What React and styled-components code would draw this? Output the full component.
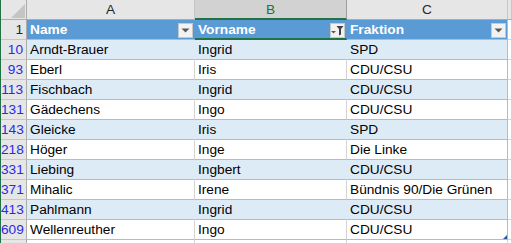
import React from "react";
import styled, { createGlobalStyle } from "styled-components";

const Global = createGlobalStyle`
  html, body { margin: 0; padding: 0; background: #fff; overflow: hidden; }
  body { font-family: "Liberation Sans", Arial, sans-serif; }
`;

const rows = [
  [10, "Arndt-Brauer", "Ingrid", "SPD"],
  [93, "Eberl", "Iris", "CDU/CSU"],
  [113, "Fischbach", "Ingrid", "CDU/CSU"],
  [131, "Gädechens", "Ingo", "CDU/CSU"],
  [143, "Gleicke", "Iris", "SPD"],
  [218, "Höger", "Inge", "Die Linke"],
  [331, "Liebing", "Ingbert", "CDU/CSU"],
  [371, "Mihalic", "Irene", "Bündnis 90/Die Grünen"],
  [413, "Pahlmann", "Ingrid", "CDU/CSU"],
  [609, "Wellenreuther", "Ingo", "CDU/CSU"],
];

const Window = styled.div`
  width: 512px;
  height: 243px;
  overflow: hidden;
  border-left: 1px solid #217346;
  box-sizing: border-box;
`;

const Sheet = styled.div`
  display: grid;
  grid-template-columns: 26px 168px 152px 161px 1fr;
  grid-auto-rows: 20px;
  font-size: 13.7px;
  line-height: 20px;
`;

const Corner = styled.div`
  background: #e6e6e6;
  border-right: 1px solid #ababab;
  border-bottom: 1px solid #ababab;
  box-sizing: border-box;
  display: flex;
  align-items: flex-end;
  justify-content: flex-end;
  padding: 0 1px 1px 0;
`;

const ColHeader = styled.div`
  background: ${(p) => (p.$selected ? "#d2d2d2" : "#e6e6e6")};
  color: ${(p) => (p.$selected ? "#217346" : "#262626")};
  border-right: 1px solid ${(p) => (p.$selected ? "#9e9e9e" : "#c6c6c6")};
  border-bottom: ${(p) => (p.$selected ? "2px solid #217346" : "1px solid #ababab")};
  box-sizing: border-box;
  text-align: center;
  line-height: 19px;
`;

const RowHeader = styled.div`
  background: #e6e6e6;
  color: ${(p) => (p.$filtered ? "#2a2ae6" : "#262626")};
  border-right: 1px solid #ababab;
  border-bottom: 1px solid #c6c6c6;
  box-sizing: border-box;
  text-align: right;
  padding-right: 3px;
  padding-top: 1px;
  line-height: 18px;
`;

const HeadCell = styled.div`
  position: relative;
  background: #5b9bd5;
  color: #fff;
  font-weight: bold;
  padding-left: 3px;
  padding-top: 1px;
  line-height: 18px;
  box-sizing: border-box;
  border-bottom: ${(p) => (p.$active ? "2px solid #217346" : "1px solid #9bc2e6")};
  border-right: 1px solid ${(p) => (p.$last ? "#9bc2e6" : "#5b9bd5")};
  display: flex;
  align-items: center;
  justify-content: space-between;
`;

const FilterButton = styled.div`
  width: 15px;
  height: 15px;
  margin-right: 1px;
  margin-top: ${(p) => (p.$active ? "1px" : "0")};
  background: #f2f2f2;
  border: 1px solid #c8c8c8;
  box-sizing: border-box;
  display: flex;
  align-items: center;
  justify-content: center;
`;

const Cell = styled.div`
  position: relative;
  background: ${(p) => (p.$band ? "#ddebf7" : "#fff")};
  color: #000;
  padding-left: 3px;
  padding-top: 1px;
  line-height: 18px;
  white-space: nowrap;
  overflow: hidden;
  box-sizing: border-box;
  border-bottom: 1px solid #9bc2e6;
  border-right: 1px solid ${(p) => (p.$last ? "#9bc2e6" : p.$band ? "#ddebf7" : "#d4d4d4")};
`;

const EmptyCell = styled.div`
  background: #fff;
  box-sizing: border-box;
  border-bottom: 1px solid #d4d4d4;
  border-right: 1px solid #d4d4d4;
`;

const Handle = styled.div`
  position: absolute;
  right: 0;
  bottom: 0;
  width: 0;
  height: 0;
  border-left: 4px solid transparent;
  border-bottom: 4px solid #2f5597;
`;

const Arrow = () => (
  <svg width="9" height="5" viewBox="0 0 9 5">
    <path d="M0.5 0.5 H8.5 L4.5 4.5 Z" fill="#595959" />
  </svg>
);

const FunnelArrow = () => (
  <svg width="13" height="11" viewBox="0 0 13 11">
    <path d="M0 6 H5 L2.5 8.5 Z" fill="#595959" />
    <path d="M5.5 1 H12.5 L10 4 V9.5 L8 10.5 V4 Z" fill="#404040" />
  </svg>
);

const CornerTriangle = () => (
  <svg width="14" height="14" viewBox="0 0 14 14">
    <path d="M14 0 V14 H0 Z" fill="#c4c4c4" />
  </svg>
);

export default function App() {
  return (
    <>
      <Global />
      <Window>
        <Sheet>
          <Corner>
            <CornerTriangle />
          </Corner>
          <ColHeader>A</ColHeader>
          <ColHeader $selected>B</ColHeader>
          <ColHeader>C</ColHeader>
          <ColHeader />

          <RowHeader>1</RowHeader>
          <HeadCell>
            Name
            <FilterButton>
              <Arrow />
            </FilterButton>
          </HeadCell>
          <HeadCell $active>
            Vorname
            <FilterButton $active>
              <FunnelArrow />
            </FilterButton>
          </HeadCell>
          <HeadCell $last>
            Fraktion
            <FilterButton>
              <Arrow />
            </FilterButton>
          </HeadCell>
          <EmptyCell />

          {rows.map(([n, name, first, party], i) => {
            const band = i % 2 === 0;
            const isLast = i === rows.length - 1;
            return (
              <React.Fragment key={n}>
                <RowHeader $filtered>{n}</RowHeader>
                <Cell $band={band}>{name}</Cell>
                <Cell $band={band}>{first}</Cell>
                <Cell $band={band} $last>
                  {party}
                  {isLast && <Handle />}
                </Cell>
                <EmptyCell />
              </React.Fragment>
            );
          })}

          <RowHeader />
          <EmptyCell />
          <EmptyCell />
          <EmptyCell />
          <EmptyCell />
        </Sheet>
      </Window>
    </>
  );
}
